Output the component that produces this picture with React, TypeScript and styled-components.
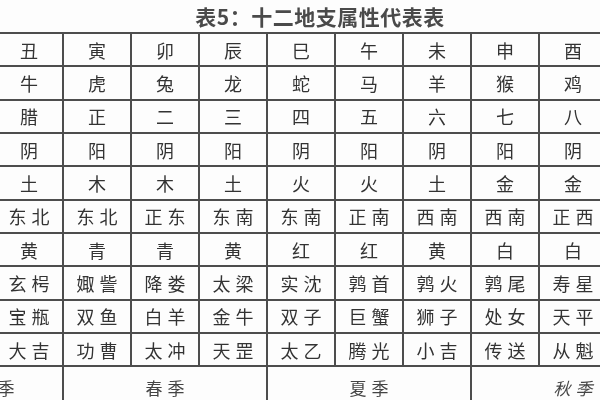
import React from "react";
import styled, { createGlobalStyle } from "styled-components";

const GlobalStyle = createGlobalStyle`
  html, body {
    margin: 0;
    padding: 0;
    background: #fff;
  }
  body {
    font-family: "Noto Sans CJK SC", "Noto Sans", sans-serif;
  }
`;

const Page = styled.div`
  width: 600px;
  height: 400px;
  overflow: hidden;
  background: #fdfdfd;
`;

const Title = styled.h1`
  margin: 0;
  height: 32px;
  padding-left: 40px;
  display: flex;
  align-items: center;
  justify-content: center;
  font-size: 21px;
  font-weight: 700;
  color: #4a4a4a;
  letter-spacing: 0.5px;
  filter: blur(0.3px);
`;

const Grid = styled.div`
  margin-left: -72px;
  width: max-content;
  display: grid;
  grid-template-columns: repeat(12, 66px);
  grid-auto-rows: 31.33px;
  gap: 2px;
  padding: 2px 0;
  background: #4d4d4d;
`;

const Cell = styled.div<{ $span?: number; $italic?: boolean }>`
  grid-column: span ${(p) => p.$span ?? 1};
  background: #fdfdfd;
  display: flex;
  align-items: center;
  justify-content: center;
  font-size: 18px;
  color: #333;
  letter-spacing: 5px;
  text-indent: 5px;
  white-space: nowrap;
  font-style: ${(p) => (p.$italic ? "italic" : "normal")};
  filter: blur(0.35px);
`;

const SeasonCell = styled(Cell)`
  height: 40px;
  font-size: 17px;
  color: #444;
`;

const columns: string[][] = [
  ["子", "鼠", "十一", "阳", "水", "正北", "黑", "星纪", "摩羯", "神后"],
  ["丑", "牛", "腊", "阴", "土", "东北", "黄", "玄枵", "宝瓶", "大吉"],
  ["寅", "虎", "正", "阳", "木", "东北", "青", "娵訾", "双鱼", "功曹"],
  ["卯", "兔", "二", "阴", "木", "正东", "青", "降娄", "白羊", "太冲"],
  ["辰", "龙", "三", "阳", "土", "东南", "黄", "太梁", "金牛", "天罡"],
  ["巳", "蛇", "四", "阴", "火", "东南", "红", "实沈", "双子", "太乙"],
  ["午", "马", "五", "阳", "火", "正南", "红", "鹑首", "巨蟹", "腾光"],
  ["未", "羊", "六", "阴", "土", "西南", "黄", "鹑火", "狮子", "小吉"],
  ["申", "猴", "七", "阳", "金", "西南", "白", "鹑尾", "处女", "传送"],
  ["酉", "鸡", "八", "阴", "金", "正西", "白", "寿星", "天平", "从魁"],
  ["戌", "狗", "九", "阳", "土", "西北", "黄", "大火", "天蝎", "河魁"],
  ["亥", "猪", "十", "阴", "水", "西北", "黑", "析木", "人马", "登明"],
];

const seasons: { name: string; span: number; italic?: boolean }[] = [
  { name: "冬季", span: 2 },
  { name: "春季", span: 3 },
  { name: "夏季", span: 3 },
  { name: "秋季", span: 3, italic: true },
  { name: "冬季", span: 1 },
];

export default function App() {
  const rowCount = columns[0].length;
  return (
    <Page>
      <GlobalStyle />
      <Title>表5：十二地支属性代表表</Title>
      <Grid>
        {Array.from({ length: rowCount }).map((_, r) =>
          columns.map((col, c) => <Cell key={`${r}-${c}`}>{col[r]}</Cell>)
        )}
        {seasons.map((s, i) => (
          <SeasonCell key={`s-${i}`} $span={s.span} $italic={s.italic}>
            {s.name}
          </SeasonCell>
        ))}
      </Grid>
    </Page>
  );
}
